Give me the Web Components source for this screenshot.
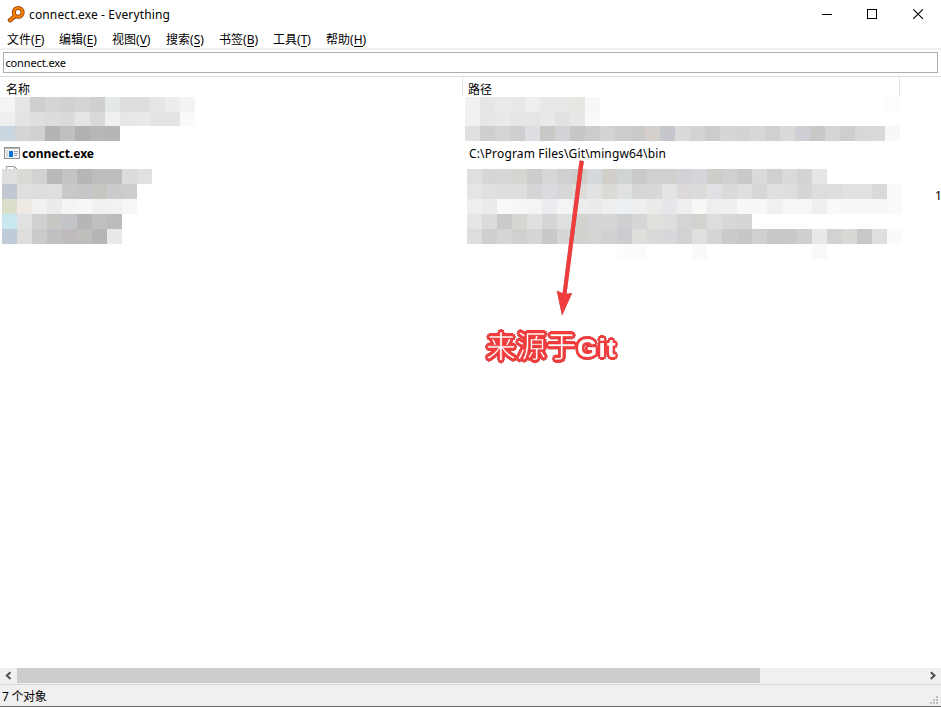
<!DOCTYPE html>
<html lang="zh-CN"><head><meta charset="utf-8"><title>connect.exe - Everything</title>
<style>
body{margin:0;background:#fff;color:#000;font:12px/16px "Noto Sans","Noto Sans CJK SC",sans-serif}
</style></head><body>
<app-window></app-window>
<script>
const define=(name,html,init)=>customElements.define(name,class extends HTMLElement{
  connectedCallback(){
    if(this.shadowRoot)return;
    this.attachShadow({mode:'open'}).innerHTML=html;
    if(init)init(this,this.shadowRoot);
  }
});

// A label whose tracking is adjusted to fill a given width.
define('fit-text','<style>:host{display:inline-block;white-space:nowrap}span{display:inline-block}</style><span><slot></slot></span>',(el,root)=>{
  const s=root.querySelector('span'),w=+el.getAttribute('w'),n=[...el.textContent].length;
  const d=(w-s.getBoundingClientRect().width)/n;
  s.style.letterSpacing=d+'px';
  el.style.width=w+'px';
});

define('title-bar',`<style>
:host{display:flex;height:30px;align-items:center;padding-left:7px;box-sizing:border-box}
.logo{margin-right:4px;flex:none}
fit-text{flex:1}
.btns{display:flex}
.btns svg{display:block;width:46px;height:30px}
.btns svg:last-child{width:45px}
</style>
<svg class="logo" width="18" height="18" viewBox="0 0 18 18"><path d="M7.3 10.7 3 14.2" stroke="#8c3f10" stroke-width="4.4" stroke-linecap="round"/><circle cx="11.2" cy="6.4" r="4.4" fill="none" stroke="#8c3f10" stroke-width="4"/><circle cx="11.2" cy="6.4" r="4.4" fill="none" stroke="#f57c00" stroke-width="2.6"/><path d="M7.6 10.2 3 14.2" stroke="#f57c00" stroke-width="2.8" stroke-linecap="round"/></svg>
<fit-text w="141">connect.exe - Everything</fit-text>
<div class="btns">
<svg viewBox="0 0 46 30"><path d="M18 14.5h10" stroke="#000" shape-rendering="crispEdges"/></svg>
<svg viewBox="0 0 46 30"><path d="M17.5 9.5h9v9h-9z" fill="none" stroke="#000" shape-rendering="crispEdges"/></svg>
<svg viewBox="0 0 45 30"><path d="m17.3 9.3 9.6 9.6m0-9.6-9.6 9.6" stroke="#000" stroke-width="1.15"/></svg>
</div>`);

define('menu-item','<style>:host{display:block;width:var(--w)}u{text-decoration:none;border-bottom:1px solid #000;display:inline-block;line-height:13px}</style><slot></slot>(<u></u>)',(el,root)=>{
  root.querySelector('u').textContent=el.getAttribute('key');
});
define('menu-bar',`<style>:host{display:flex;height:18px;padding:1px 0 0 7px;box-sizing:border-box;line-height:17px}</style>
<menu-item key="F" style="--w:52px">文件</menu-item><menu-item key="E" style="--w:53px">编辑</menu-item><menu-item key="V" style="--w:54px">视图</menu-item><menu-item key="S" style="--w:53px">搜索</menu-item><menu-item key="B" style="--w:54px">书签</menu-item><menu-item key="T" style="--w:53px">工具</menu-item><menu-item key="H" style="--w:54px">帮助</menu-item>`);

define('search-box',`<style>:host{display:block;border-top:2px solid #f0f0f0;border-bottom:1px solid #dadada;padding:2px 3px 3px}
div{height:21px;box-sizing:border-box;border:1px solid #abadb3;padding:2px 0 0 1.4px;font-size:11px;line-height:16px}</style>
<div><fit-text w="60.5">connect.exe</fit-text></div>`);

define('column-head',`<style>:host{display:grid;grid-template:20px/463px 437px 1fr;height:20px;line-height:16px}
div{border-right:1px solid #e2e2e2;padding:5px 0 0 6px;box-sizing:border-box;height:20px}div+div{padding-left:5px}</style><div>名称</div><div>路径</div>`);

// One strip of 15px colour cells; "-" leaves a cell empty.
define('cell-strip','<style>:host{display:flex;height:var(--h,15px)}i{flex:none;width:15px}</style>',(el,root)=>{
  for(const c of el.getAttribute('cells').trim().split(/\s+/)){
    const i=document.createElement('i');
    if(c!=='-')i.style.background='#'+c;
    root.append(i);
  }
});
define('cell-block','<style>:host{display:block}</style>',(el,root)=>{
  el.textContent.trim().split('\n').forEach((line,k)=>{
    const s=document.createElement('cell-strip');
    s.setAttribute('cells',line);
    s.style.setProperty('--h',el.getAttribute('heights').split(' ')[k]+'px');
    root.append(s);
  });
});

define('result-row',`<style>:host{display:grid;grid-template-columns:469px 1fr;height:28px;box-sizing:border-box}
.n{display:grid;grid-template:25px 3px/auto 1fr;column-gap:2px;padding-left:4px;font-weight:bold;line-height:25px}
.n svg{margin-top:6px}.doc{grid-area:2/1;margin:0!important}.p{line-height:25px}</style>
<div class="n"><svg width="16" height="12" shape-rendering="crispEdges"><path d="M0 0h16v12H0z" fill="#8b9093"/><path d="M1 2h14v9H1z" fill="#f4f5f6"/><path d="M1 1h14v1H1z" fill="#b5babd"/><path d="M2 3h2v7H2z" fill="#d5dadd"/><path d="M5 4h4v6H5z" fill="#0870d0"/><path d="M10 4h4v1h-4zM10 6h4v1h-4zM10 8h3v1h-3z" fill="#a0a4a8"/></svg><fit-text w="72">connect.exe</fit-text>
<svg class="doc" width="16" height="3"><path d="M2.5 3V.5h8L13 3" fill="#fff" stroke="#999"/><path d="M10.5 1v2" stroke="#999"/></svg></div>
<div class="p"><fit-text w="197">C:\\Program Files\\Git\\mingw64\\bin</fit-text></div>`);

// Callout lettering: thin white glyphs inside a round red halo.
define('call-out',`<style>:host{display:flex;align-items:baseline;white-space:nowrap;color:#fff;line-height:40px;filter:drop-shadow(.4px .8px .6px #0006)}
:host{--r:#f03c3c;text-shadow:2.6px 0 var(--r),-2.6px 0 var(--r),0 2.6px var(--r),0 -2.6px var(--r),1.8px 1.8px var(--r),-1.8px 1.8px var(--r),1.8px -1.8px var(--r),-1.8px -1.8px var(--r),1.3px 0 var(--r),-1.3px 0 var(--r),0 1.3px var(--r),0 -1.3px var(--r)}
.c{font-family:"Noto Sans CJK SC",sans-serif;font-size:30px;letter-spacing:.3px;-webkit-text-stroke:.7px var(--r)}
.l{font:bold 26px/40px "Liberation Sans",sans-serif}</style><span class="c">来源于</span><fit-text class="l" w="40">Git</fit-text>`);

define('result-list',`<style>:host{display:block;position:relative;height:571px;overflow:hidden}
.g{display:grid;grid-template-columns:465px 1fr}.top{height:44px}.low{height:402px;padding-left:2px;box-sizing:border-box;align-items:start}
.low{grid-template-columns:464.7px 1fr}
.size{position:absolute;left:935px;top:91px}
call-out{position:absolute;left:486px;top:227px}
svg{position:absolute;left:540px;top:60px}</style>
<div class="g top"><cell-block heights="14.5 14.5 15">f3f5f5 e6e6e6 cfcfcf d5d5d5 d1d1d1 d6d5d3 cfcfcf e5e8e8 dedfdd dededd e6e6e6 ededee f3f3f2
edf0ef e4e4e4 dedede dcdcdc dadada e5e5e5 d9d9d9 f0f0f0 e7e7e7 e9e9e9 e4e4e4 e4e4e4 fafaf8
c9d6e0 d6d5d3 d1d1d3 b5b4b2 bec0c2 b1b1b1 b7b7b7 b5b6b8</cell-block>
<cell-block heights="14.5 14.5 15">f1f1f1 e6e6e4 e9eaec e7e9e9 eeeeef e8e8e8 e8e8e7 e6e6e3 f6f8fa - - - - - - - - - - - - - - - - - - - fdfdfd
f1f1f1 e6e6e4 e9e9ea e6e6e6 e5e5e6 e9e9e9 e2e1df e7e7e7 f8fafa
e0e0e0 cfcfce d6d3d4 cdcfd1 dfdde1 c8c8c7 d3d2d6 c7c7c7 cccccc d5d2d5 cccccc cacac8 d5d0cc c5c7cc dadada d3d3d3 cbcccb d6d6d6 d1d4d3 d7d7d7 d1cfd0 dcdad9 cdcfd4 c8c8c6 d4d4d4 cccfce dad8d7 d8dad9 f8f8f8</cell-block></div>
<result-row></result-row>
<div class="g low"><cell-block heights="14.5 15 15 15 15">dee0df dad9d6 d2d2d2 bab9b7 c2c4c6 b6b6b6 bdbdbd bcbdbf dedbdd e1e1e4
c2c8d1 dfdfe0 dddddd dde0df c8c8c6 c6c6c9 c7c6c1 cacbcd cbcdce
d9dfc8 efe9e4 f1f1f0 ebebeb f5f5f5 f7f7f7 f1f1f0 f2f2f2 f5f7f6
c8e7ee e0e2e2 d1d1d1 c8c6c3 c3c4c7 b6b6b6 c0c0c0 bbbcbe
bfcbd7 dddddd cccbc9 bfc0c2 bfbbbd c0bebb b6b6b6 e8e9eb</cell-block>
<cell-block heights="14.5 15 15 15 15 15">dfdfdf d5d7d7 d5d8d7 d6d5d2 cccdcf d7d6d9 d0cfd1 cfcecb d6d9db d2cfcb d0d4d4 cacaca d0d0ce d0d0ce d3d1d5 d5d6da cfcdca d0d0d2 c9c9c7 dadada d0d0d0 dadada d4d2d2 e5e6e8
e6e5e3 dfe0e0 dedede dededd d3d5d7 dbdbdf d7d7d7 dddad8 e1e2e4 dbdad7 dfe2e1 d6d6d6 d8d8d8 e4e4e2 ddd9da dbdbd9 dfe1e4 dadada dfdfdf d7d7d7 e0e0e0 dfdedc d6d6d6 dddddd dedede dfe1e3 e1e1e1 d9d9d9 fafafa
eeeeee ebebe9 f8faf9 f6f6f6 f5f4f2 ececf0 f4f4f4 ededed ebebec efeeec ecf0f3 efefef ebeae8 e7e7eb eeeeee f7f7f5 eeeeef efefef f7f7f5 f6f7f7 eff1f0 f6f6f6 f6f6f6 efefef f9f9f7 f7f7f7 f8f8f8 f7f7f7 fafafa
e6e6e6 dcdcdc cacaca d7d6d3 e1e0de d6d6d9 dedfdf d2d2cf d4d4d7 d8d6d5 cfcfd2 d6d6d6 e0dfdc dedede d4d4d4 d2d2cf dedcdd d8d8d9 d5d5d5
dddddd cecfd1 d6d6d6 cfd1d0 d6d6d7 cac8c9 d5d6d8 d2d1ce d4d4d2 d0d1d3 cccdd0 dfdedb d9d9d9 d7d8dc d2d2d2 e0dfdd d3d6d5 cccbc9 c6c8c7 cfd1d0 c8c8c8 c9c9c7 cfcfcf e8e8e6 d0d2d4 d9d8d5 c8c8ca dddfe1 fafafa
- - - - - - - - - - fcfcfc fafcfc - - - fafafa - - - - - - - f9f9f9</cell-block></div>
<span class="size">1</span>
<svg width="60" height="170" viewBox="540 157 60 170"><path d="M579.5 160.5 562.6 293.2 556.7 290.5 562 315.8 572.2 293 566.6 293.8 583.8 161z" fill="#f03c3c" style="filter:drop-shadow(.3px .6px .5px #0005)"/></svg>
<call-out></call-out>`);

define('scroll-bar',`<style>:host{display:flex;height:16px;background:#f0f0f0}svg{flex:none}.t{width:743px;height:15px;background:#cdcdcd}.s{flex:1}</style>
<svg width="17" height="16"><path d="m10.5 4.2-3.7 3.4 3.7 3.4" fill="none" stroke="#505050" stroke-width="2"/></svg><div class="t"></div><div class="s"></div><svg width="17" height="16"><path d="m6.8 4.2 3.7 3.4-3.7 3.4" fill="none" stroke="#505050" stroke-width="2"/></svg>`);

define('status-bar',`<style>:host{display:flex;justify-content:space-between;height:23px;box-sizing:border-box;background:#f0f0f0;border-top:1px solid #d7d7d7;border-bottom:1px solid #6b6b6b;padding-left:2px;line-height:23px}svg{align-self:end;margin:0 2px 1px 0}</style>
<fit-text w="44.5">7 个对象</fit-text><svg width="10" height="10" shape-rendering="crispEdges"><path d="M7 1h2v2H7zM4 4h2v2H4zM7 4h2v2H7zM1 7h2v2H1zM4 7h2v2H4zM7 7h2v2H7z" fill="#bfbfbf"/></svg>`);

define('app-window',`<style>:host{display:flex;flex-direction:column;width:941px;height:707px;overflow:hidden}:host>*{flex:none}</style>
<title-bar></title-bar><menu-bar></menu-bar><search-box></search-box><column-head></column-head><result-list></result-list><scroll-bar></scroll-bar><status-bar></status-bar>`);
</script></body></html>
